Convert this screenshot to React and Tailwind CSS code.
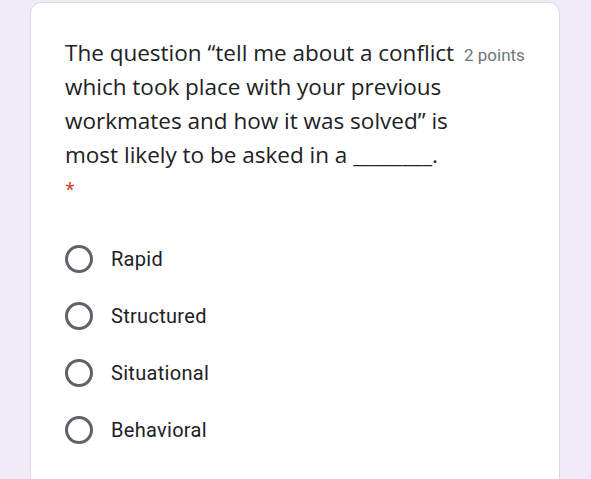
import { useState } from 'react';

const options = ['Rapid', 'Structured', 'Situational', 'Behavioral'];

export default function App() {
  const [picked, setPicked] = useState(null);

  return (
    <div className="min-h-screen bg-[#f0ebf8] pl-[30px] pr-[31px] pt-[2px] overflow-hidden">
      <div className="h-[490px] rounded-[11px] border border-[#dadce0] bg-white pl-[34px] pr-[20px] pt-[33px]">
        {/* Header */}
        <div className="flex items-start">
          <div
            className="w-[392px] text-[22.5px] leading-[34px] text-[#202124]"
            style={{ fontFamily: '"Open Sans", sans-serif' }}
          >
            The question “tell me about a conflict which took place with your previous workmates and how it was solved” is most likely to be asked in a ________.
            <div className="text-[18px] text-[#d93025]">*</div>
          </div>
          <span
            className="ml-[7px] mt-[7px] whitespace-nowrap text-[17px] leading-[24px] text-[#70757a]"
            style={{ fontFamily: 'Roboto, sans-serif' }}
          >
            2 points
          </span>
        </div>

        {/* Options */}
        <div className="mt-[24px] flex flex-col">
          {options.map(opt => (
            <label
              key={opt}
              onClick={() => setPicked(opt)}
              className="flex h-[57px] cursor-pointer items-center gap-[18px]"
            >
              <span className="flex h-[28px] w-[28px] items-center justify-center rounded-full border-[3px] border-[#5f6368]">
                {picked === opt && <span className="h-[14px] w-[14px] rounded-full bg-[#673ab7]" />}
              </span>
              <span
                className="text-[20px] tracking-[0.3px] text-[#202124]"
                style={{ fontFamily: 'Roboto, sans-serif' }}
              >
                {opt}
              </span>
            </label>
          ))}
        </div>
      </div>
    </div>
  );
}
